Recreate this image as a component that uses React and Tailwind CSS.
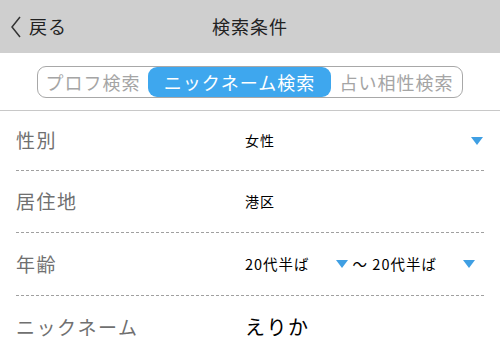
const font = { fontFamily: '"Noto Sans CJK JP", "Noto Sans", sans-serif' };

function Tri() {
  return (
    <svg width="12" height="8" viewBox="0 0 12 8" className="block">
      <polygon points="0,0 12,0 6,8" fill="#3f9fe3" />
    </svg>
  );
}

function Row({ label, children, h = 'h-[61px]', last = false }) {
  return (
    <div className={`mx-[16px] flex items-center ${h} ${last ? '' : 'border-b border-dashed border-[#a0a0a0]'}`}>
      <div className="w-[229px] text-[19px] tracking-[1.5px] text-[#707070]">{label}</div>
      <div className="flex-1 flex items-center text-[14px] tracking-[1px] text-black">{children}</div>
    </div>
  );
}

export default function App() {
  return (
    <div className="w-[500px] h-[360px] bg-white overflow-hidden" style={font}>
      <div className="relative h-[53px] bg-[#cfcfcf] flex items-center justify-center">
        <div className="absolute left-[10px] top-0 h-full flex items-center gap-[8px]">
          <svg width="11" height="22" viewBox="0 0 11 22">
            <polyline points="10,1 2,11 10,21" fill="none" stroke="#333" strokeWidth="1.5" />
          </svg>
          <span className="text-[18px] tracking-[1px] text-[#222]">戻る</span>
        </div>
        <span className="text-[18px] tracking-[1px] text-[#222]">検索条件</span>
      </div>

      <div className="h-[58px] border-b border-[#c8c8c8] flex justify-center pt-[13px]">
        <div className="flex h-[32px] w-[426px] rounded-[9px] border border-[#a8a8a8] overflow-hidden text-[18px] tracking-[1px]">
          <div className="w-[110px] flex items-center justify-center text-[#a5a5a5]">プロフ検索</div>
          <div className="w-[183px] flex items-center justify-center bg-[#3ea7ee] text-white rounded-[9px]">ニックネーム検索</div>
          <div className="flex-1 flex items-center justify-center text-[#a5a5a5]">占い相性検索</div>
        </div>
      </div>

      <Row label="性別" h="h-[60px]">
        <span>女性</span>
        <span className="ml-auto mr-[1px]"><Tri /></span>
      </Row>
      <Row label="居住地" h="h-[62px]">
        <span>港区</span>
      </Row>
      <Row label="年齢" h="h-[63px]">
        <span className="text-[14.5px]">20代半ば</span>
        <span className="ml-[26px]"><Tri /></span>
        <span className="ml-[5px] text-[14.5px]">～ 20代半ば</span>
        <span className="ml-auto mr-[9px]"><Tri /></span>
      </Row>
      <Row label="ニックネーム" h="h-[62px]" last>
        <span className="text-[20px] tracking-[1.5px]">えりか</span>
      </Row>
    </div>
  );
}
